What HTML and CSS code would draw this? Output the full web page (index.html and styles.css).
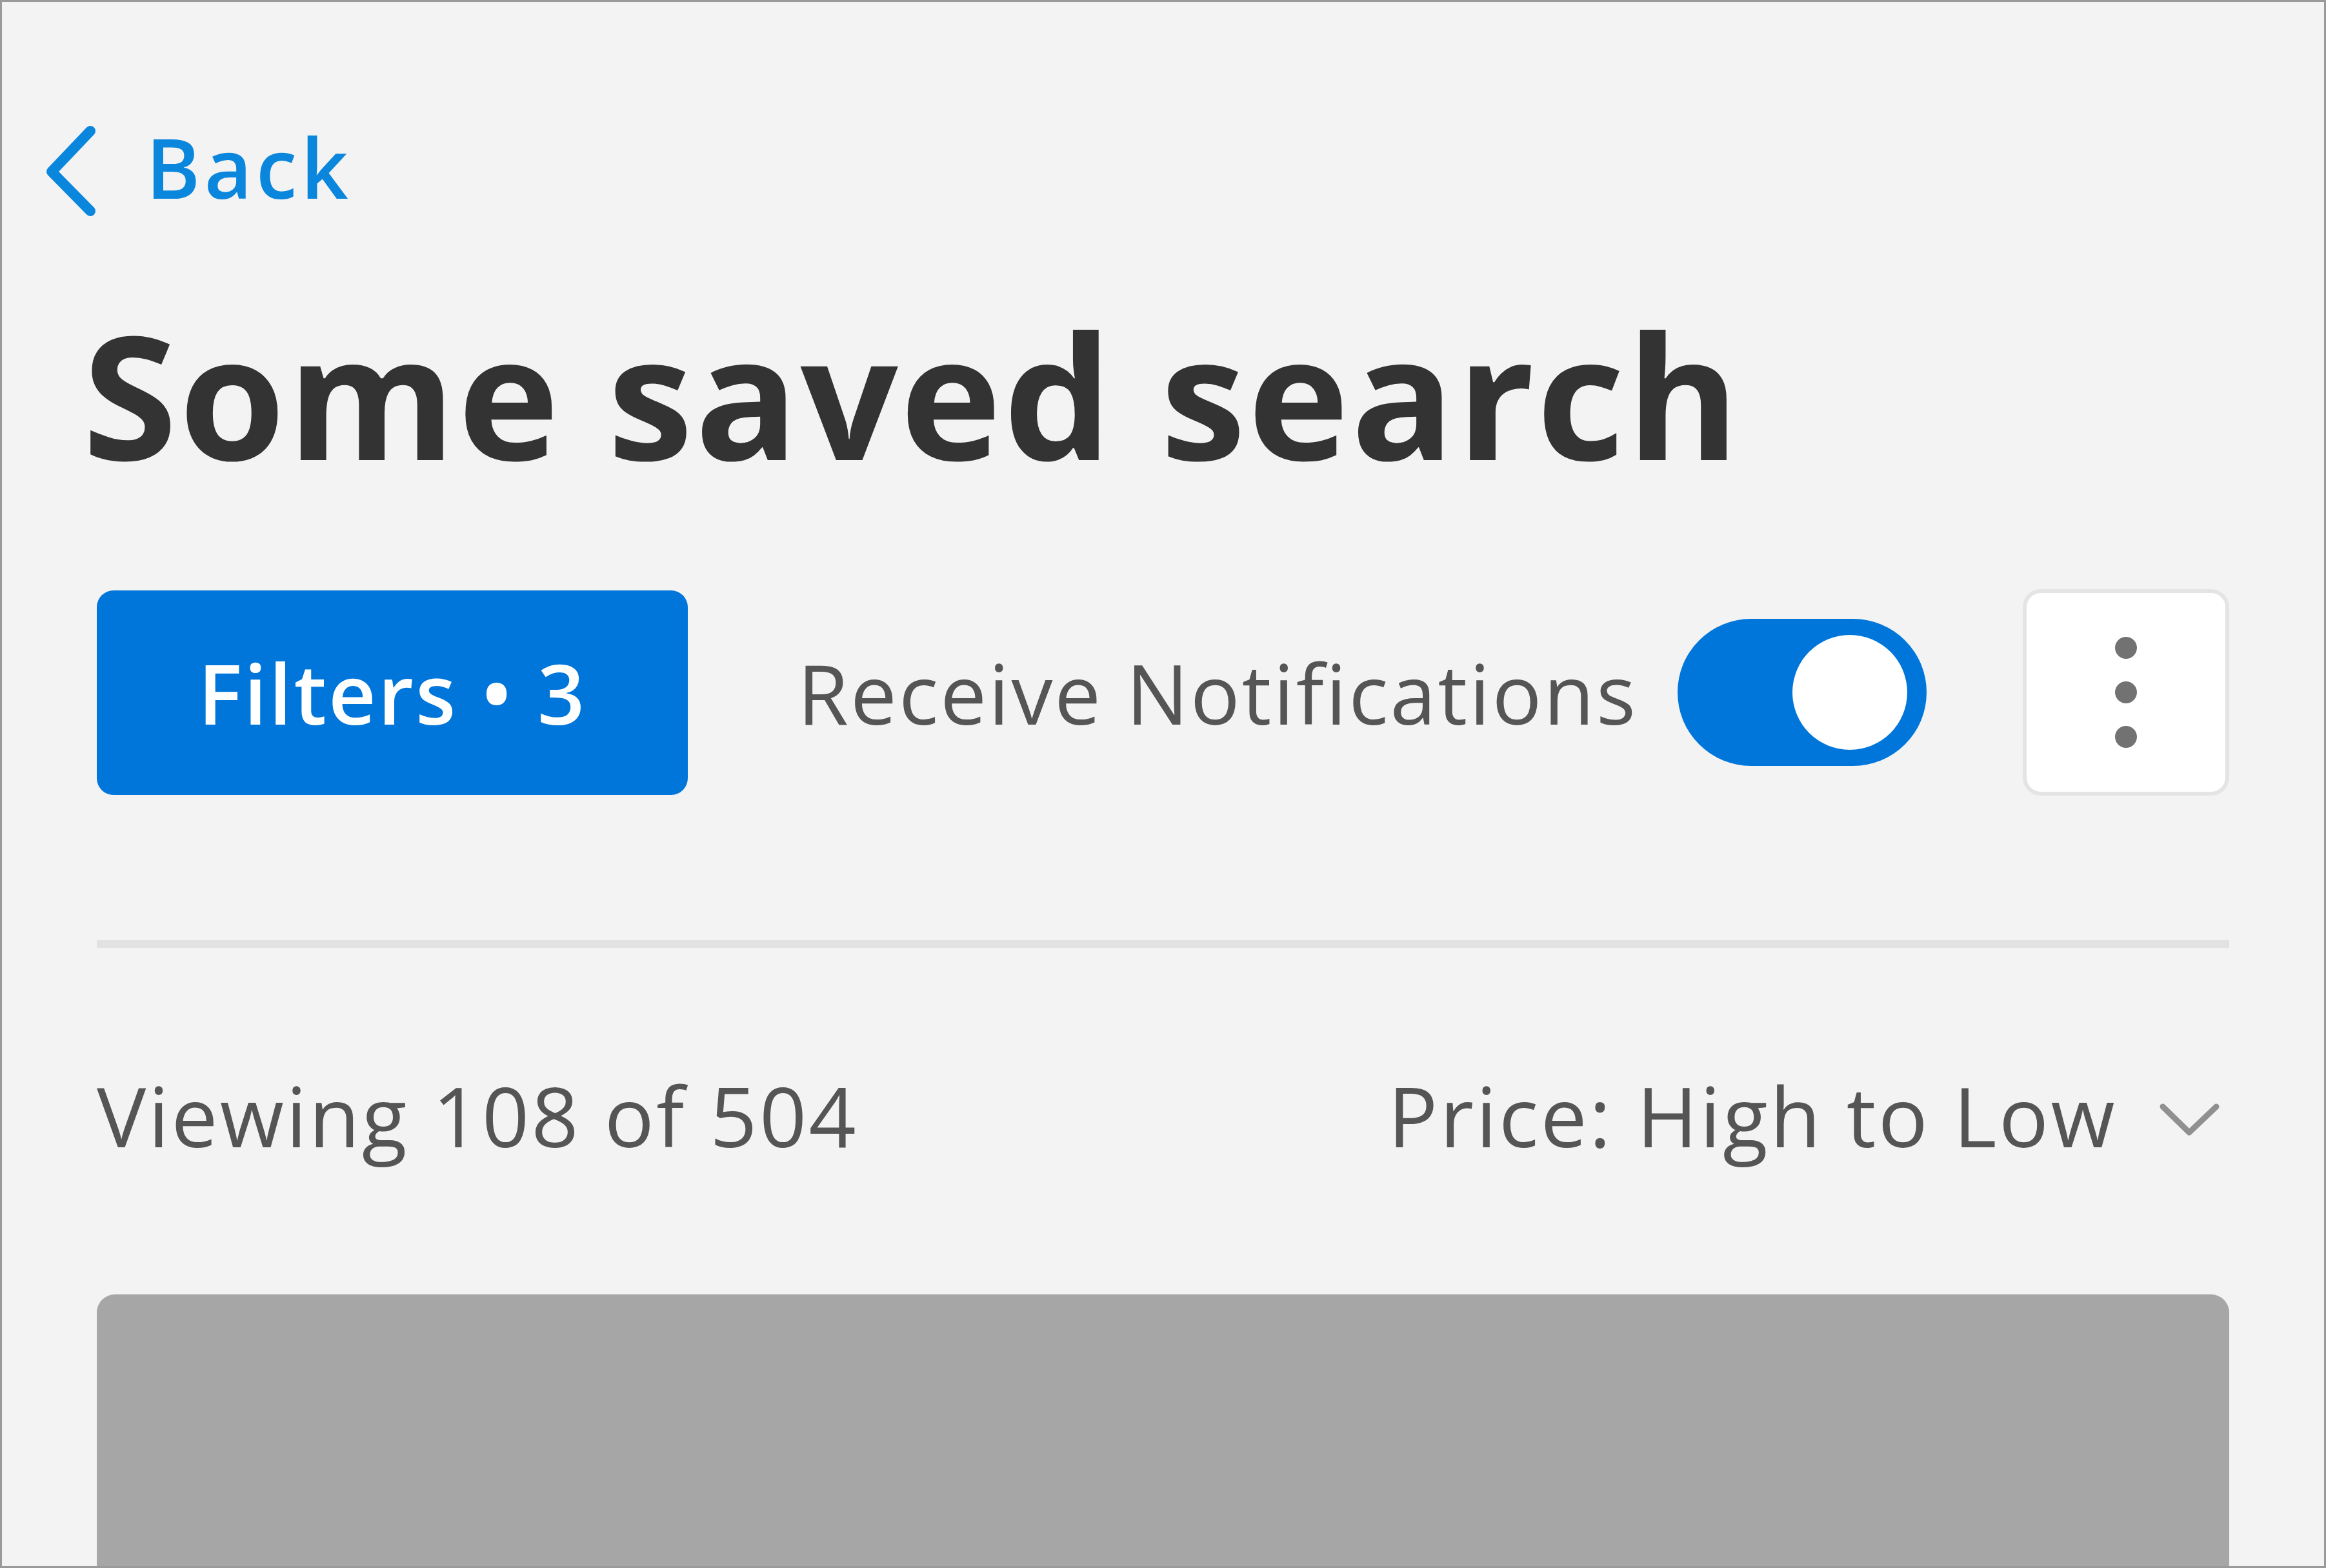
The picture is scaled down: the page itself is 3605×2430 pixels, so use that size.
FILE: index.html
```html
<!DOCTYPE html>
<html lang="en">
<head>
<meta charset="utf-8">
<title>Some saved search</title>
<link rel="stylesheet" href="styles.css">
</head>
<body>
<div class="frame">
  <a class="back" href="#">
    <svg class="back-icon" width="84" height="160" viewBox="0 0 84 160" aria-hidden="true">
      <path d="M72 24 L12 87 L72 148" fill="none" stroke="#0a86dc" stroke-width="16" stroke-linecap="round" stroke-linejoin="round"/>
    </svg>
    <span class="back-text">Back</span>
  </a>

  <h1 class="title">Some saved search</h1>

  <div class="actions">
    <button class="filters">Filters • 3</button>
    <span class="notify-label">Receive Notifications</span>
    <span class="toggle" role="switch" aria-checked="true"><span class="knob"></span></span>
    <button class="kebab" aria-label="More options">
      <span class="dot"></span><span class="dot"></span><span class="dot"></span>
    </button>
  </div>

  <div class="divider"></div>

  <div class="sort-row">
    <span class="count">Viewing 108 of 504</span>
    <span class="sort">
      <span class="sort-text">Price: High to Low</span>
      <svg class="sort-icon" width="110" height="70" viewBox="0 0 110 70" aria-hidden="true">
        <path d="M7 22 L48 62 L90 22" fill="none" stroke="#909090" stroke-width="9" stroke-linecap="round" stroke-linejoin="round"/>
      </svg>
    </span>
  </div>

  <div class="card"></div>
</div>
</body>
</html>
```

FILE: styles.css
```css
html, body {
  margin: 0;
  padding: 0;
  background: #f3f3f3;
}

.frame {
  box-sizing: border-box;
  width: 3605px;
  height: 2430px;
  border: 3px solid #9a9a9a;
  background: #f3f3f3;
  overflow: hidden;
  padding: 0 147px;
  font-family: "Open Sans", "Noto Sans", sans-serif;
}

.back {
  display: flex;
  align-items: center;
  height: 174px;
  margin-top: 169px;
  margin-left: -82px;
  text-decoration: none;
  color: #0a86dc;
}

.back-icon {
  flex: none;
  display: block;
}

.back-text {
  margin-left: 74px;
  font-size: 128px;
  font-weight: 600;
  line-height: 174px;
  letter-spacing: 6px;
}

.title {
  margin: 86px 0 0 -22px;
  font-size: 266px;
  font-weight: 700;
  line-height: 357px;
  color: #333333;
  letter-spacing: 3px;
}

.actions {
  display: flex;
  align-items: center;
  height: 320px;
  margin-top: 124px;
}

.filters {
  flex: none;
  box-sizing: border-box;
  width: 916px;
  height: 317px;
  border: 0;
  border-radius: 26px;
  background: #0076db;
  color: #ffffff;
  font-family: inherit;
  font-size: 128px;
  font-weight: 600;
  letter-spacing: 3px;
  padding: 0;
}

.notify-label {
  margin-left: 170px;
  font-size: 128px;
  color: #555555;
  letter-spacing: 3px;
  white-space: nowrap;
}

.toggle {
  position: relative;
  flex: none;
  width: 386px;
  height: 228px;
  margin-left: auto;
  border-radius: 114px;
  background: #0076db;
}

.knob {
  position: absolute;
  top: 25px;
  right: 30px;
  width: 178px;
  height: 178px;
  border-radius: 50%;
  background: #ffffff;
}

.kebab {
  flex: none;
  box-sizing: border-box;
  width: 320px;
  height: 320px;
  margin-left: 149px;
  padding: 0;
  border: 6px solid #e4e4e4;
  border-radius: 28px;
  background: #ffffff;
  display: flex;
  flex-direction: column;
  align-items: center;
  justify-content: center;
  gap: 35px;
}

.dot {
  display: block;
  width: 34px;
  height: 34px;
  border-radius: 50%;
  background: #727272;
}

.divider {
  height: 12px;
  margin-top: 224px;
  background: #e2e2e2;
}

.sort-row {
  display: flex;
  justify-content: space-between;
  align-items: center;
  height: 174px;
  margin-top: 172px;
  font-size: 128px;
  color: #555555;
  letter-spacing: 3.4px;
}

.sort {
  display: flex;
  align-items: center;
}

.sort-icon {
  display: block;
  margin-left: 64px;
}

.card {
  height: 800px;
  margin-top: 191px;
  border-radius: 28px 28px 0 0;
  background: #a6a6a6;
}
```
